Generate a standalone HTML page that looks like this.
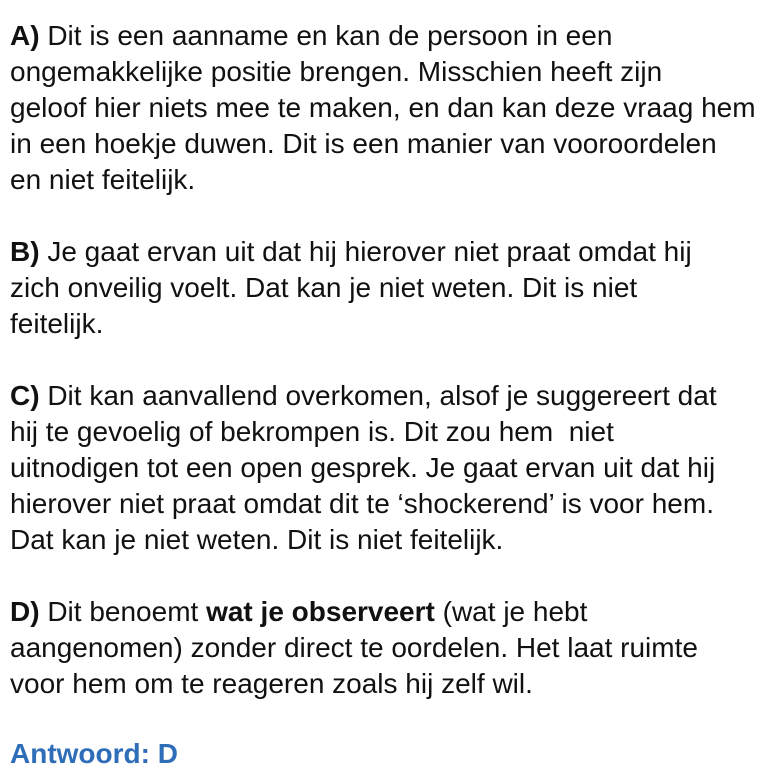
<!DOCTYPE html>
<html><head><meta charset="utf-8"><style>
html,body{margin:0;padding:0;background:#fff;width:770px;height:782px;overflow:hidden}
body{font-family:"Liberation Sans",Arial,sans-serif;font-size:28px;color:#111;position:relative}
.l{position:absolute;left:10px;white-space:nowrap;line-height:36px;height:36px}
b{font-weight:bold}
.ans{color:#2e6db8;font-weight:bold}
</style></head><body>
<div class="l" style="top:18px"><b>A)</b> Dit is een aanname en kan de persoon in een</div>
<div class="l" style="top:54px">ongemakkelijke positie brengen. Misschien heeft zijn</div>
<div class="l" style="top:90px">geloof hier niets mee te maken, en dan kan deze vraag hem</div>
<div class="l" style="top:126px">in een hoekje duwen. Dit is een manier van vooroordelen</div>
<div class="l" style="top:162px">en niet feitelijk.</div>
<div class="l" style="top:234px"><b>B)</b> Je gaat ervan uit dat hij hierover niet praat omdat hij</div>
<div class="l" style="top:270px">zich onveilig voelt. Dat kan je niet weten. Dit is niet</div>
<div class="l" style="top:306px">feitelijk.</div>
<div class="l" style="top:378px"><b>C)</b> Dit kan aanvallend overkomen, alsof je suggereert dat</div>
<div class="l" style="top:414px">hij te gevoelig of bekrompen is. Dit zou hem&nbsp; niet</div>
<div class="l" style="top:450px">uitnodigen tot een open gesprek. Je gaat ervan uit dat hij</div>
<div class="l" style="top:486px">hierover niet praat omdat dit te ‘shockerend’ is voor hem.</div>
<div class="l" style="top:522px">Dat kan je niet weten. Dit is niet feitelijk.</div>
<div class="l" style="top:594px"><b>D)</b> Dit benoemt <b>wat je observeert</b> (wat je hebt</div>
<div class="l" style="top:630px">aangenomen) zonder direct te oordelen. Het laat ruimte</div>
<div class="l" style="top:666px">voor hem om te reageren zoals hij zelf wil.</div>
<div class="l ans" style="top:736px">Antwoord: D</div>
</body></html>
